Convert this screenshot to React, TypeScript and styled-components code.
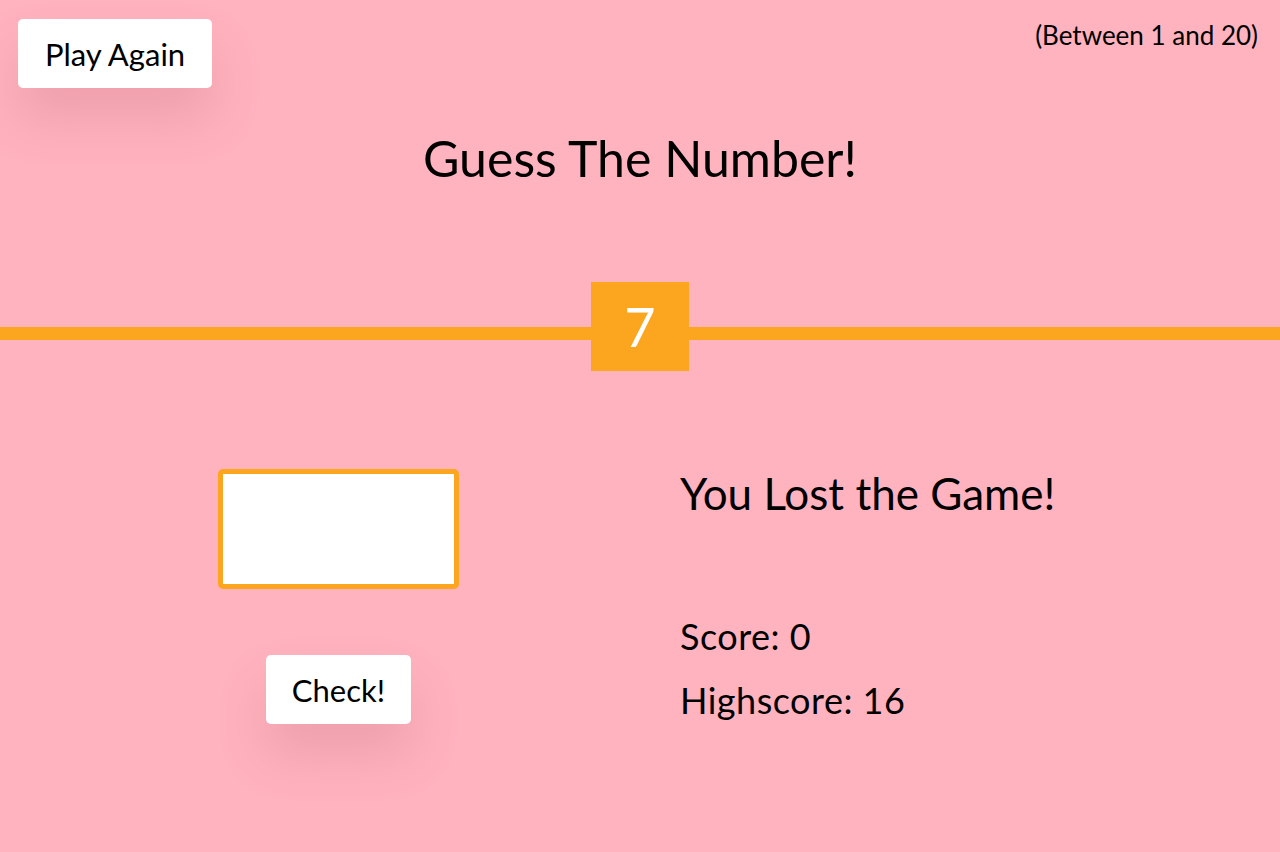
import styled, { createGlobalStyle } from 'styled-components';

const GlobalStyle = createGlobalStyle`
  * {
    box-sizing: border-box;
  }
  body {
    margin: 0;
    background: #ffb3be;
    font-family: Lato, 'Open Sans', sans-serif;
    color: #000;
  }
`;

const Page = styled.div`
  width: 1280px;
  height: 852px;
  overflow: hidden;
`;

const TopBar = styled.header`
  display: flex;
  justify-content: space-between;
  align-items: flex-start;
  padding: 19px 22px 0 18px;
`;

const WhiteButton = styled.button<{ $w: number }>`
  width: ${(p) => p.$w}px;
  height: 69px;
  background: #fff;
  border: none;
  border-radius: 5px;
  font-family: inherit;
  font-size: 31px;
  color: #000;
  cursor: pointer;
  box-shadow: 0 30px 50px rgba(170, 80, 100, 0.2);
`;

const Hint = styled.p`
  margin: 0;
  padding-top: 0;
  font-size: 26px;
  line-height: 32px;
`;

const Title = styled.h1`
  margin: 40px 0 0;
  text-align: center;
  font-weight: 400;
  font-size: 50px;
  line-height: 60px;
`;

const Divider = styled.div`
  display: flex;
  align-items: flex-start;
  margin-top: 94px;
`;

const Line = styled.div`
  flex: 1;
  height: 13px;
  margin-top: 45px;
  background: #fca61f;
`;

const NumberBox = styled.div`
  width: 98px;
  height: 89px;
  background: #fca61f;
  color: #fff;
  display: flex;
  align-items: center;
  justify-content: center;
  font-size: 54px;
`;

const Main = styled.main`
  display: grid;
  grid-template-columns: 680px 1fr;
  margin-top: 98px;
`;

const LeftCol = styled.section`
  display: flex;
  flex-direction: column;
  align-items: center;
  padding-right: 3px;
  gap: 66px;
`;

const GuessInput = styled.input`
  width: 241px;
  height: 120px;
  border: 5px solid #fca61f;
  border-radius: 5px;
  background: #fff;
  font-family: inherit;
  font-size: 48px;
  text-align: center;
  outline: none;
`;

const RightCol = styled.section`
  display: flex;
  flex-direction: column;
`;

const Message = styled.p`
  margin: 0 0 98px;
  font-size: 44px;
  line-height: 48px;
`;

const Stat = styled.p`
  margin: 0 0 22px;
  font-size: 36px;
  line-height: 42px;
  letter-spacing: 0.5px;
`;

export default function App() {
  return (
    <Page>
      <GlobalStyle />
      <TopBar>
        <WhiteButton $w={194}>Play Again</WhiteButton>
        <Hint>(Between 1 and 20)</Hint>
      </TopBar>
      <Title>Guess The Number!</Title>
      <Divider>
        <Line />
        <NumberBox>7</NumberBox>
        <Line />
      </Divider>
      <Main>
        <LeftCol>
          <GuessInput type="number" />
          <WhiteButton $w={145}>Check!</WhiteButton>
        </LeftCol>
        <RightCol>
          <Message>You Lost the Game!</Message>
          <Stat>Score: 0</Stat>
          <Stat>Highscore: 16</Stat>
        </RightCol>
      </Main>
    </Page>
  );
}
